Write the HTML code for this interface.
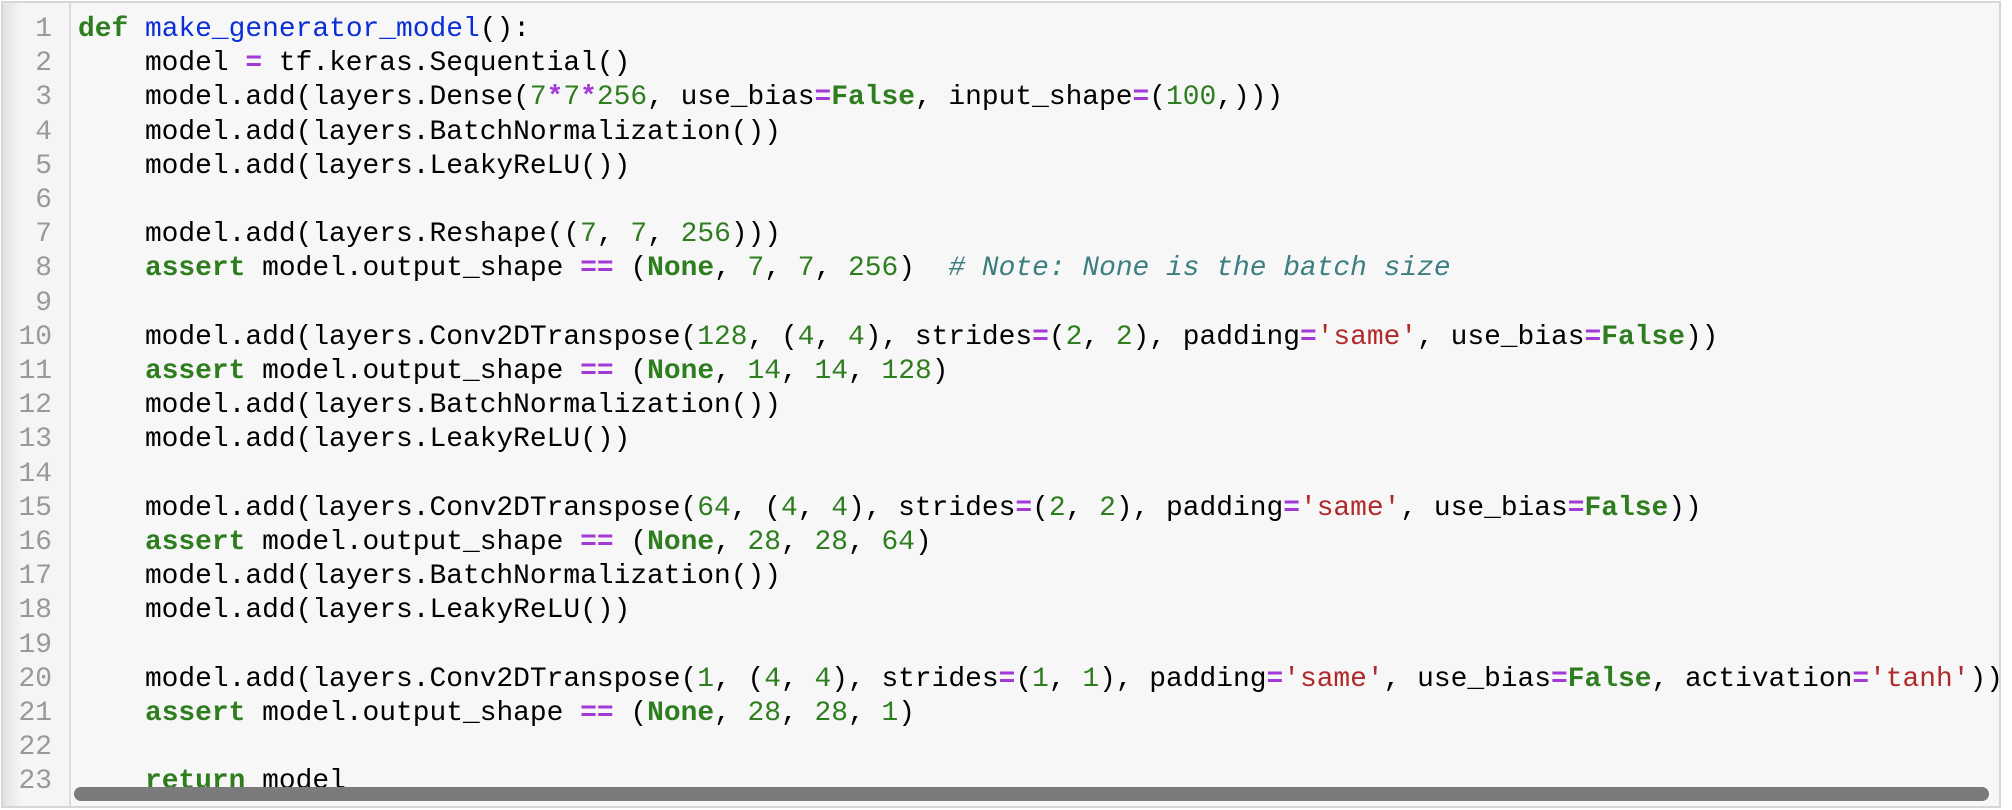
<!DOCTYPE html>
<html><head><style>
html,body{margin:0;padding:0;background:#fff;width:2012px;height:810px;overflow:hidden}
.box{position:absolute;left:1px;top:1px;width:1996px;height:803px;border:2px solid #d6d6d6;background:#f7f7f7;overflow:hidden}
.gut{position:absolute;left:0;top:0;width:66px;height:100%;background:linear-gradient(90deg,#e2e2e2 0,#f5f5f5 18px,#f5f5f5 100%);border-right:2px solid #dcdcdc}
pre{margin:0;position:absolute;top:10px;font-family:"Liberation Mono",monospace;font-size:27.9px;line-height:34.2px}
.ln{left:0;width:49px;text-align:right;color:#999}
.code{left:75px;color:#000}
.k{color:#2e7d1f;font-weight:bold}.f{color:#0b2fd6}.o{color:#a33ad8;font-weight:bold}.n{color:#2e7d1f}.s{color:#b02a2a}.c{color:#3d7f80;font-style:italic}
.sb{position:absolute;left:71px;top:784px;width:1915px;height:14px;border-radius:7px;background:#7b7b7b}
</style></head><body>
<div class="box">
<div class="gut"></div>
<pre class="ln">1
2
3
4
5
6
7
8
9
10
11
12
13
14
15
16
17
18
19
20
21
22
23</pre>
<pre class="code"><span class="k">def</span> <span class="f">make_generator_model</span>():
    model <span class="o">=</span> tf.keras.Sequential()
    model.add(layers.Dense(<span class="n">7</span><span class="o">*</span><span class="n">7</span><span class="o">*</span><span class="n">256</span>, use_bias<span class="o">=</span><span class="k">False</span>, input_shape<span class="o">=</span>(<span class="n">100</span>,)))
    model.add(layers.BatchNormalization())
    model.add(layers.LeakyReLU())

    model.add(layers.Reshape((<span class="n">7</span>, <span class="n">7</span>, <span class="n">256</span>)))
    <span class="k">assert</span> model.output_shape <span class="o">==</span> (<span class="k">None</span>, <span class="n">7</span>, <span class="n">7</span>, <span class="n">256</span>)  <span class="c"># Note: None is the batch size</span>

    model.add(layers.Conv2DTranspose(<span class="n">128</span>, (<span class="n">4</span>, <span class="n">4</span>), strides<span class="o">=</span>(<span class="n">2</span>, <span class="n">2</span>), padding<span class="o">=</span><span class="s">'same'</span>, use_bias<span class="o">=</span><span class="k">False</span>))
    <span class="k">assert</span> model.output_shape <span class="o">==</span> (<span class="k">None</span>, <span class="n">14</span>, <span class="n">14</span>, <span class="n">128</span>)
    model.add(layers.BatchNormalization())
    model.add(layers.LeakyReLU())

    model.add(layers.Conv2DTranspose(<span class="n">64</span>, (<span class="n">4</span>, <span class="n">4</span>), strides<span class="o">=</span>(<span class="n">2</span>, <span class="n">2</span>), padding<span class="o">=</span><span class="s">'same'</span>, use_bias<span class="o">=</span><span class="k">False</span>))
    <span class="k">assert</span> model.output_shape <span class="o">==</span> (<span class="k">None</span>, <span class="n">28</span>, <span class="n">28</span>, <span class="n">64</span>)
    model.add(layers.BatchNormalization())
    model.add(layers.LeakyReLU())

    model.add(layers.Conv2DTranspose(<span class="n">1</span>, (<span class="n">4</span>, <span class="n">4</span>), strides<span class="o">=</span>(<span class="n">1</span>, <span class="n">1</span>), padding<span class="o">=</span><span class="s">'same'</span>, use_bias<span class="o">=</span><span class="k">False</span>, activation<span class="o">=</span><span class="s">'tanh'</span>))
    <span class="k">assert</span> model.output_shape <span class="o">==</span> (<span class="k">None</span>, <span class="n">28</span>, <span class="n">28</span>, <span class="n">1</span>)

    <span class="k">return</span> model</pre>
<div class="sb"></div>
</div>
</body></html>
